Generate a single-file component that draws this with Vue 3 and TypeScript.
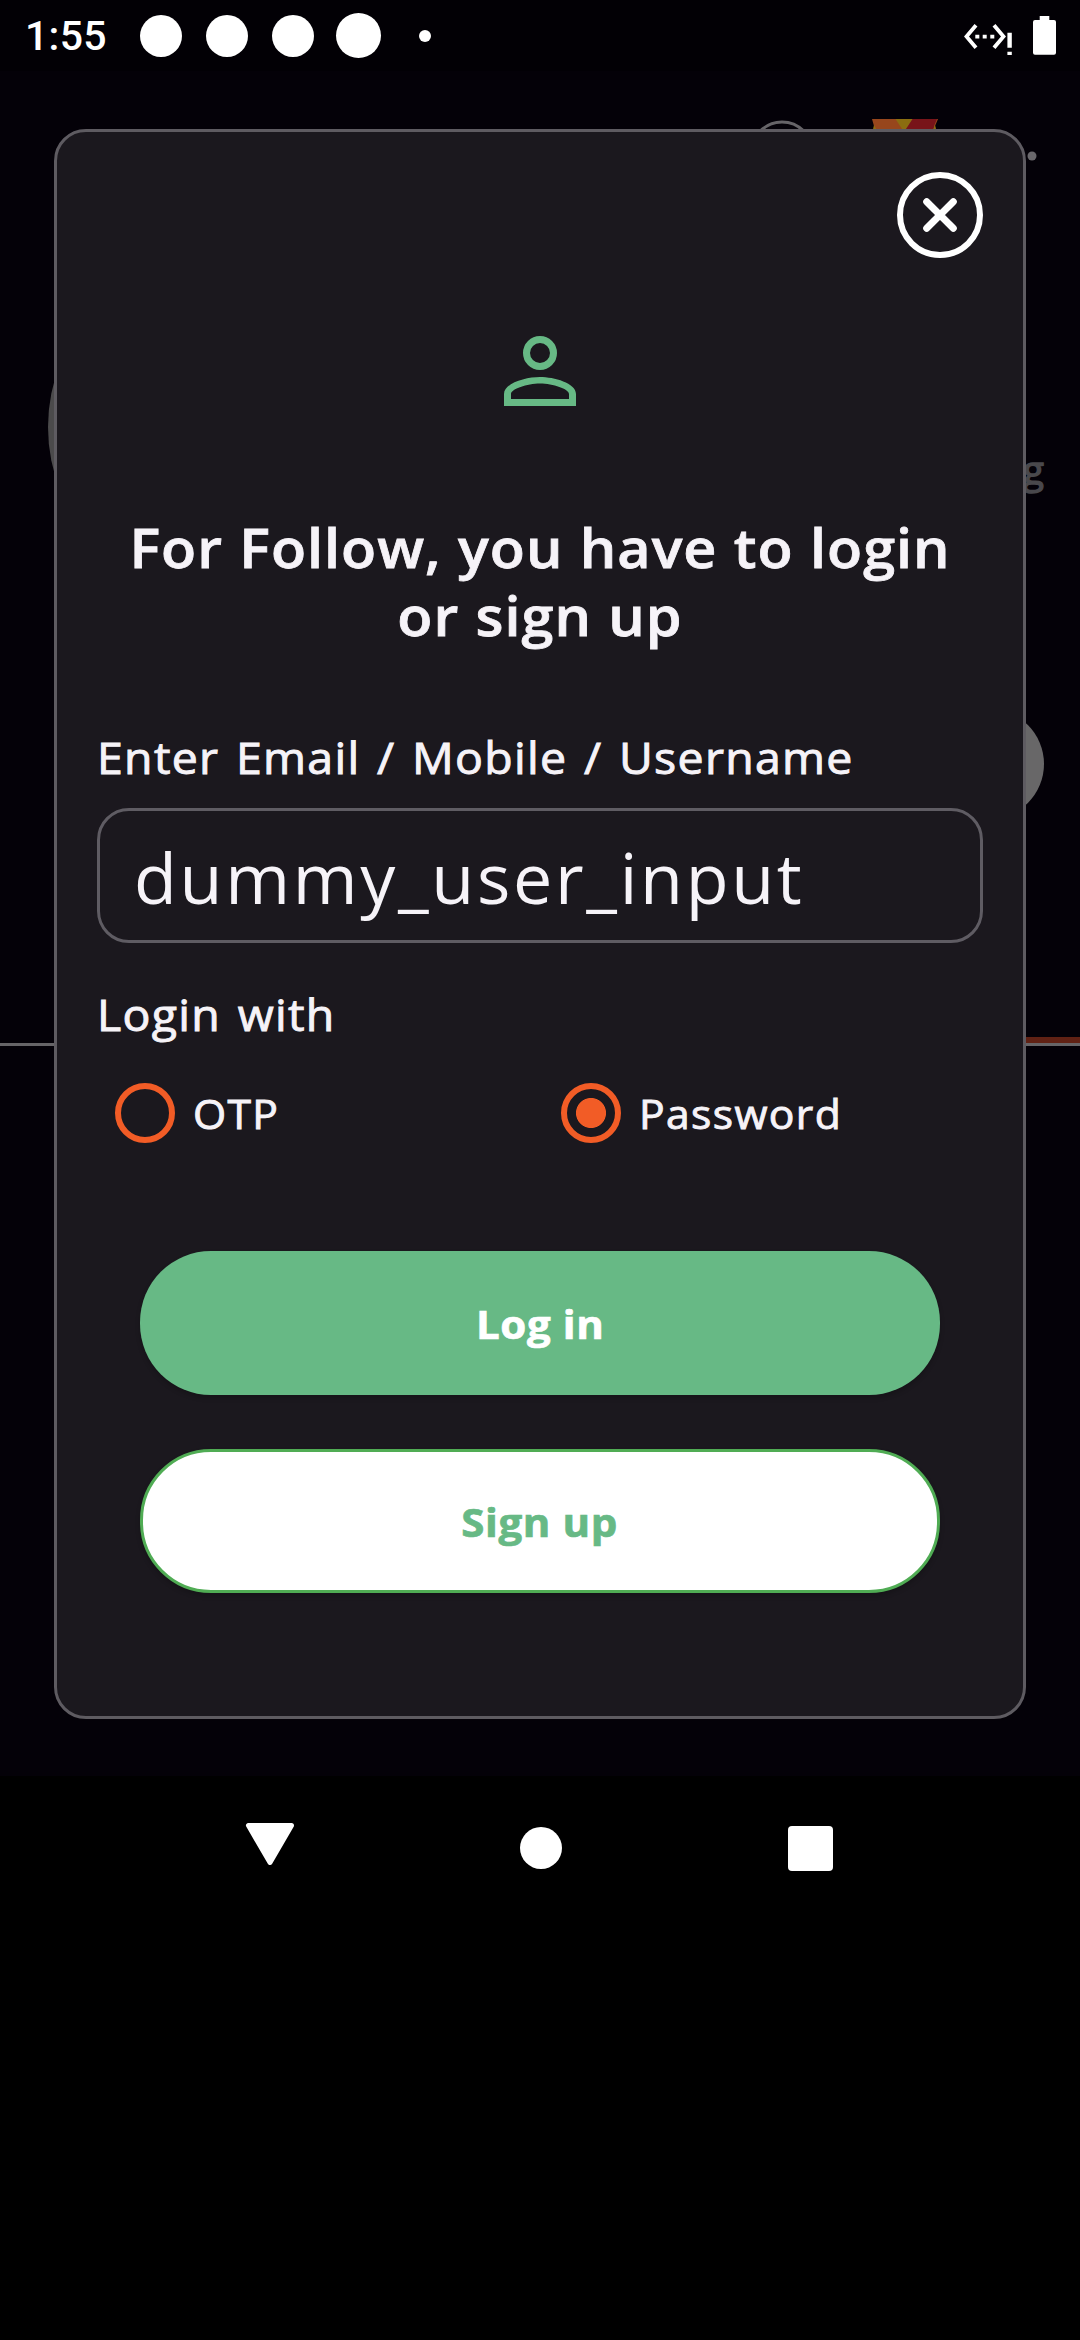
<script setup lang="ts">
import { ref } from 'vue'

type Method = 'otp' | 'password'

const methods: { id: Method; label: string }[] = [
  { id: 'otp', label: 'OTP' },
  { id: 'password', label: 'Password' },
]
const selected = ref<Method>('password')
const username = ref('dummy_user_input')
</script>

<template>
  <div class="screen">
    <header class="status">
      <span class="time">1:55</span>
      <i class="note"></i>
      <i class="note"></i>
      <i class="note"></i>
      <i class="note big"></i>
      <i class="note tiny"></i>
      <svg class="net" width="50" height="34" viewBox="0 0 50 34">
        <path d="M14 4.2 4.500 15.500 14 26.800M32 4.200 41.500 15.500 32 26.800" fill="none" stroke="#fff" stroke-width="3.800" />
        <path d="M13.300 13.700h4v3.800h-4zM20.700 13.700h4v3.800h-4zM28.300 13.700h4v3.800h-4zM45.400 11.700h4.400v15h-4.400zM45.400 30.700h4.400v3.300h-4.400z" fill="#fff" />
      </svg>
      <svg class="battery" width="23" height="39" viewBox="0 0 23 39">
        <path d="M6.700 0h9.600v4H21a2 2 0 0 1 2 2v30.700a2 2 0 0 1-2 2H2a2 2 0 0 1-2-2V6a2 2 0 0 1 2-2h4.700z" fill="#fff" />
      </svg>
    </header>

    <main class="page">
      <svg class="behind" width="1080" height="1705" viewBox="0 71 1080 1705">
        <circle cx="782" cy="152.500" r="30.500" fill="none" stroke="#666468" stroke-width="3" />
        <path d="M872 119h66l-3 7 2 8h-64l1-8z" fill="#97461c" />
        <path d="M911 119h26l-3 7 2 8h-35z" fill="#781419" />
        <path d="M895.500 119h17l-8.500 13zM874 125l5 9h-7zM935 125l-4 9h6z" fill="#8b6d10" />
        <circle cx="1032" cy="156" r="4.500" fill="#6a686c" />
        <circle cx="218" cy="427" r="170" fill="#4b4a4b" />
        <circle cx="989" cy="764" r="55" fill="#686768" />
        <path d="M540 1037h540v6H540z" fill="#602114" />
        <path d="M0 1043h1080v3H0z" fill="#666467" />
        <text x="1044" y="484" text-anchor="end" class="tab-word">g</text>
      </svg>

      <section class="dialog">
        <button class="close" aria-label="Close">
          <svg width="86" height="86" viewBox="0 0 86 86" fill="none" stroke="#fff">
            <circle cx="43" cy="43" r="40" stroke-width="6" />
            <path d="M29.700 29.700 56.300 56.300M56.300 29.700 29.700 56.300" stroke-width="7" stroke-linecap="round" />
          </svg>
        </button>

        <svg class="person" width="72" height="70" viewBox="0 0 72 70">
          <circle cx="36" cy="17" r="13.500" fill="none" stroke="#67b985" stroke-width="7" />
          <path fill="#67b985" fill-rule="evenodd" d="M0 70V58C0 47 22 41 36 41s36 6 36 17v12zM7 63h58v-5c0-5-16-10.500-29-10.500S7 53 7 58z" />
        </svg>

        <h1 class="title">For Follow, you have to login<br />or sign up</h1>

        <label class="label l1" for="user">Enter Email / Mobile / Username</label>
        <input id="user" v-model="username" class="field" type="text" spellcheck="false" />

        <p class="label l2">Login with</p>
        <div class="radios">
          <label v-for="m in methods" :key="m.id" class="option">
            <input v-model="selected" class="radio" type="radio" :value="m.id" />
            <span class="option-text">{{ m.label }}</span>
          </label>
        </div>

        <button class="btn primary"><span class="btn-text">Log in</span></button>
        <button class="btn outline"><span class="btn-text">Sign up</span></button>
      </section>
    </main>

    <nav class="nav">
      <svg width="48" height="46" viewBox="0 0 48 46">
        <path d="M2.500 1.500h43L24 38.500z" fill="#fff" stroke="#fff" stroke-width="5" stroke-linejoin="round" transform="translate(0 1)" />
      </svg>
      <i class="home"></i>
      <i class="recent"></i>
    </nav>
  </div>
</template>

<style>
body {
  margin: 0;
  background: #000;
}
</style>

<style scoped>
.screen {
  width: 1080px;
  height: 2340px;
  background: #000;
  color: #f6f3f8;
  font-family: 'Open Sans', 'Noto Sans', sans-serif;
  overflow: hidden;
}
.status {
  display: flex;
  align-items: center;
  box-sizing: border-box;
  height: 71px;
  padding: 0 24px 0 25px;
  background: #020005;
}
.time {
  width: 115px;
  font: 500 41px/72px Roboto, sans-serif;
  color: #fff;
  letter-spacing: 0.3px;
}
.note {
  width: 42px;
  height: 42px;
  margin-right: 24px;
  border-radius: 50%;
  background: #fff;
}
.note.big {
  width: 45px;
  height: 45px;
  margin: 0 38px 0 -2px;
}
.note.tiny {
  width: 12px;
  height: 12px;
  margin: 0;
}
.net {
  margin: 4px 21px 0 auto;
}
.page {
  position: relative;
  height: 1705px;
  background: #040108;
}
.behind {
  position: absolute;
  inset: 0;
}
.tab-word {
  font-size: 39px;
  fill: #49484c;
  stroke: #49484c;
  stroke-width: 1.4px;
}
.dialog {
  position: absolute;
  left: 54px;
  top: 58px;
  box-sizing: border-box;
  width: 972px;
  height: 1590px;
  padding: 40px 40px 0;
  display: flex;
  flex-direction: column;
  border: 3px solid #5e5b61;
  border-radius: 32px;
  background: #1b181e;
}
.close {
  align-self: flex-end;
  width: 86px;
  height: 86px;
  padding: 0;
  border: 0;
  background: none;
}
.close svg {
  display: block;
}
.person {
  align-self: center;
  margin-top: 78px;
}
.title {
  margin: 107px 0 0;
  font-size: 54.6px;
  line-height: 68px;
  font-weight: 600;
  letter-spacing: 0.95px;
  word-spacing: 0.4px;
  text-align: center;
  white-space: nowrap;
  transform: scaleX(1.053);
  -webkit-text-stroke: 0.8px currentColor;
}
.label {
  align-self: flex-start;
  margin: 0;
  font-size: 43px;
  line-height: 62px;
  letter-spacing: 1.2px;
  word-spacing: 3px;
  white-space: nowrap;
  transform: scaleX(1.08);
  transform-origin: left;
  -webkit-text-stroke: 0.9px currentColor;
}
.l1 {
  margin-top: 78px;
}
.l2 {
  margin-top: 41px;
}
.field {
  box-sizing: border-box;
  width: 886px;
  height: 135px;
  margin-top: 19px;
  padding: 2px 34px 0;
  border: 3px solid #5f5c63;
  border-radius: 32px;
  outline: 0;
  background: transparent;
  color: #f6f3f8;
  font: 400 70px 'Open Sans', 'Noto Sans', sans-serif;
  letter-spacing: 2.7px;
}
.radios {
  display: flex;
  margin: 37px 0 0 18px;
}
.option {
  display: flex;
  flex: none;
  width: 446px;
  gap: 18px;
}
.option-text {
  font-size: 40px;
  line-height: 62px;
  letter-spacing: 1.3px;
  transform: scaleX(1.065);
  transform-origin: left;
  -webkit-text-stroke: 0.9px currentColor;
}
.radio {
  appearance: none;
  box-sizing: border-box;
  width: 60px;
  height: 60px;
  margin: 0;
  border: 6px solid #f25c26;
  border-radius: 50%;
}
.radio:checked {
  background: radial-gradient(circle, #f25c26 14.600px, transparent 15.400px);
}
.btn {
  box-sizing: border-box;
  width: 800px;
  height: 144px;
  margin-left: 43px;
  padding: 2px 0 0;
  border: 0;
  border-radius: 71px;
  font: 700 40px/60px 'Open Sans', 'Noto Sans', sans-serif;
  box-shadow: 0 3px 5px rgba(0, 0, 0, 0.2);
}
.btn-text {
  display: inline-block;
  letter-spacing: 0.6px;
  transform: scaleX(1.05);
  -webkit-text-stroke: 0.7px currentColor;
}
.primary {
  margin-top: 106px;
  background: #67b985;
  color: #fff;
}
.outline {
  margin-top: 54px;
  border: 3px solid #50ac54;
  background: #fff;
  color: #67b985;
}
.nav {
  display: flex;
  align-items: center;
  justify-content: space-between;
  height: 144px;
  padding: 0 247px 0 246px;
}
.nav svg {
  margin-bottom: 4px;
  overflow: visible;
}
.home {
  width: 42px;
  height: 42px;
  border-radius: 50%;
  background: #fff;
}
.recent {
  width: 45px;
  height: 45px;
  border-radius: 4px;
  background: #fff;
}
</style>
